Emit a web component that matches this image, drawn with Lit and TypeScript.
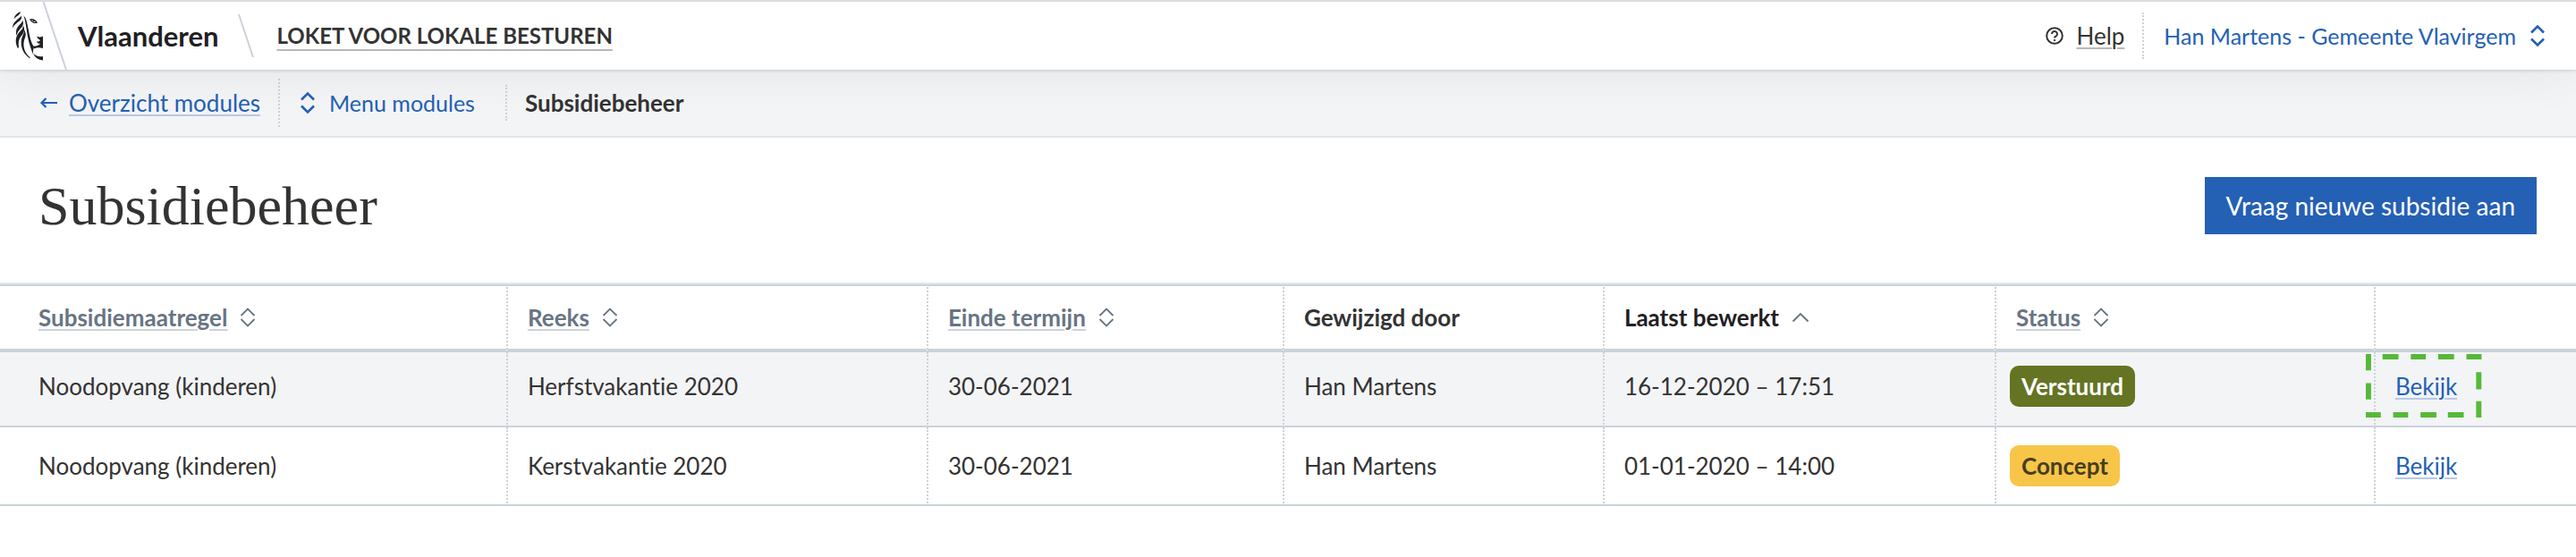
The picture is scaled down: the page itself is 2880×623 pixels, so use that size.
import { LitElement, html, css, svg } from "lit";
import { customElement, property } from "lit/decorators.js";

interface Column {
  label: string;
  sort: "none" | "both" | "asc";
}

interface Row {
  measure: string;
  series: string;
  deadline: string;
  author: string;
  edited: string;
  status: "Verstuurd" | "Concept";
  highlighted: boolean;
}

const COLUMNS: Column[] = [
  { label: "Subsidiemaatregel", sort: "both" },
  { label: "Reeks", sort: "both" },
  { label: "Einde termijn", sort: "both" },
  { label: "Gewijzigd door", sort: "none" },
  { label: "Laatst bewerkt", sort: "asc" },
  { label: "Status", sort: "both" },
];

const ROWS: Row[] = [
  {
    measure: "Noodopvang (kinderen)",
    series: "Herfstvakantie 2020",
    deadline: "30-06-2021",
    author: "Han Martens",
    edited: "16-12-2020 – 17:51",
    status: "Verstuurd",
    highlighted: true,
  },
  {
    measure: "Noodopvang (kinderen)",
    series: "Kerstvakantie 2020",
    deadline: "30-06-2021",
    author: "Han Martens",
    edited: "01-01-2020 – 14:00",
    status: "Concept",
    highlighted: false,
  },
];

const baseStyles = css`
  * {
    box-sizing: border-box;
  }
  svg {
    display: block;
    flex: none;
  }
  a {
    color: inherit;
    text-decoration: underline;
    text-decoration-thickness: 2px;
    text-underline-offset: 3px;
  }
  button {
    font: inherit;
    color: inherit;
    background: none;
    border: 0;
    padding: 0;
    cursor: pointer;
  }
`;

const selectIcon = html`<svg width="18" height="26" viewBox="0 0 18 26" fill="none" stroke="currentColor" stroke-width="2.6" aria-hidden="true">
  <path d="M2 9.5 9 2.5l7 7M2 16.5l7 7 7-7" />
</svg>`;

const sortIcon = html`<svg width="18" height="22" viewBox="0 0 18 22" fill="none" stroke="currentColor" stroke-width="1.8" aria-hidden="true">
  <path d="M1.5 9 9 1.5 16.5 9M1.5 13 9 20.5 16.5 13" />
</svg>`;

const ascIcon = html`<svg width="20" height="22" viewBox="0 0 20 22" fill="none" stroke="currentColor" stroke-width="1.8" aria-hidden="true">
  <path d="M1.5 15.5 10 7l8.500 8.500" />
</svg>`;

const lion = svg`
  <path d="M15.500 21.500C16 17.500 18.500 15 23 13C22.500 16 20.500 17 18.500 18.500Q16.500 20 15.500 21.500Z"/>
  <path d="M14 31.500C14 25.500 18 23 21.500 20Q23.500 18.500 24 17.500C25 22 21.500 23.500 18.500 26Q15 28.500 14 31.500Z"/>
  <path d="M18.500 40C16.500 31.500 21 29 24 25.500Q25 24 25 22.500C27.500 27 25 30 22 33Q19 36 18.500 40Z"/>
  <path d="M19.500 53.500C15.500 44 19 38.500 23 34.500Q26 31.500 26 28.500C28.500 33 26.500 37 24 40Q19.500 45 21 53.500Z"/>
  <path d="M33.500 65.500C24 59 21.500 48 25.500 39.500Q27.500 36 27 33.500C30 38 28.500 41 27 45C25 53 28.500 60.500 33.500 64Z"/>
  <path d="M26.500 17.500C30 21 30.500 27 32 34C33 40 34.500 47 37.500 52L38.500 50Q36.500 57 37 61C33 51 31 43 30 35C29 28 28 22 26.500 17.500Z"/>
  <path d="M33 21.500C36 20 40 21.500 42 25.500L40.500 26C37 26.500 34.500 24.500 33 21.500ZM35 22.500Q36.500 25 40 25Q38.500 22 35 22.500Z" fill-rule="evenodd"/>
  <circle cx="37.500" cy="23.500" r="1"/>
  <path d="M41 40.500Q44.500 42.500 48 40.500V54Q42.500 52.500 38 54.500L37 52Q43 51.500 45.500 48.500Q42 49.500 41 46.500Q44 47 45 45Q42 44 41 40.500Z"/>
  <path d="M37 59.500Q41 64 48 63V67.500Q40 67 37 59.500Z"/>
`;

@customElement("site-header")
class SiteHeader extends LitElement {
  static styles = [
    baseStyles,
    css`
      :host {
        display: block;
        position: relative;
        z-index: 1;
      }
      .bar {
        display: flex;
        align-items: center;
        height: 78px;
        padding-right: 34px;
        background: #fff;
        border-top: 2px solid #dcdce2;
        box-shadow: 0 1px 4px rgba(0, 0, 0, 0.16), 0 0 60px rgba(0, 0, 0, 0.07);
        color: #333332;
      }
      .brand {
        display: flex;
        align-items: center;
        gap: 11px;
        color: #1f2023;
        font-size: 31px;
        font-weight: 700;
        text-decoration: none;
      }
      .slash {
        margin: 0 25px 0 22px;
      }
      .site {
        font-size: 24px;
        font-weight: 700;
        text-decoration-color: #b8b8b8;
        text-underline-offset: 6px;
      }
      .tools {
        display: flex;
        align-items: center;
        margin-left: auto;
      }
      .help {
        display: flex;
        align-items: center;
        gap: 14px;
        padding-right: 20px;
      }
      .help a {
        text-decoration-color: #b8b8b8;
      }
      .user {
        display: flex;
        align-items: center;
        gap: 15px;
        min-height: 52px;
        padding-left: 22px;
        border-left: 2px dotted #cbd2d9;
        color: #2460b4;
        font-size: 25px;
      }
    `,
  ];

  render() {
    return html`<header class="bar">
      <a class="brand" href="#">
        <svg width="76" height="76" viewBox="0 2 76 76" aria-hidden="true">
          <g fill="#1f2023">${lion}</g>
          <path d="M48.500 2 74 78" stroke="#cbd2d9" stroke-width="2" fill="none" />
        </svg>
        <span>Vlaanderen</span>
      </a>
      <svg class="slash" width="18" height="48" viewBox="0 0 18 48" aria-hidden="true">
        <path d="M1 0 17 48" stroke="#cbd2d9" stroke-width="2" fill="none" />
      </svg>
      <a class="site" href="#">LOKET VOOR LOKALE BESTUREN</a>
      <div class="tools">
        <div class="help">
          <svg width="20" height="20" viewBox="0 0 20 20" fill="none" stroke="currentColor" stroke-width="2" aria-hidden="true">
            <circle cx="10" cy="10" r="8.800" />
            <path d="M7 8a3 3 0 1 1 4.600 2.500Q10 11.300 10 12.500" />
            <path d="M10 14v2" />
          </svg>
          <a href="#">Help</a>
        </div>
        <button class="user" type="button">Han Martens - Gemeente Vlavirgem ${selectIcon}</button>
      </div>
    </header>`;
  }
}

@customElement("module-nav")
class ModuleNav extends LitElement {
  static styles = [
    baseStyles,
    css`
      :host {
        display: block;
      }
      .nav {
        display: flex;
        align-items: center;
        height: 76px;
        padding: 0 44px;
        background: #f3f4f6;
        border-bottom: 2px solid #e4e6e9;
        color: #2460b4;
      }
      .back {
        display: flex;
        align-items: center;
        gap: 13px;
        padding-right: 20px;
      }
      .back a {
        text-decoration-color: #b4cae8;
      }
      .menu {
        display: flex;
        align-items: center;
        gap: 15px;
        min-height: 54px;
        padding: 0 34px 0 22px;
        border-left: 2px dotted #cbd2d9;
        font-size: 25px;
      }
      .current {
        display: flex;
        align-items: center;
        min-height: 40px;
        padding-left: 20px;
        border-left: 2px dotted #cbd2d9;
        color: #333332;
        font-weight: 700;
      }
    `,
  ];

  render() {
    return html`<nav class="nav" aria-label="Kruimelpad">
      <div class="back">
        <svg width="20" height="14" viewBox="0 0 20 14" fill="none" stroke="currentColor" stroke-width="2.200" aria-hidden="true">
          <path d="M20 7H2.500M7.500 2l-5 5 5 5" />
        </svg>
        <a href="#">Overzicht modules</a>
      </div>
      <button class="menu" type="button">${selectIcon} Menu modules</button>
      <span class="current" aria-current="page">Subsidiebeheer</span>
    </nav>`;
  }
}

@customElement("subsidy-table")
class SubsidyTable extends LitElement {
  @property({ attribute: false }) rows: Row[] = [];

  static styles = [
    baseStyles,
    css`
      :host {
        display: block;
      }
      .table {
        width: 100%;
        table-layout: fixed;
        border-collapse: separate;
        border-spacing: 0;
        border-top: 2px solid #e4e7ea;
        color: #333332;
      }
      .c-measure { width: 19.65%; }
      .c-series { width: 16.32%; }
      .c-deadline { width: 13.82%; }
      .c-author { width: 12.43%; }
      .c-edited { width: 15.21%; }
      .c-status { width: 14.72%; }
      .c-action { width: 7.85%; }
      th,
      td {
        padding: 0 22px;
        border-left: 2px dotted #cbd2d9;
        text-align: left;
        vertical-align: middle;
        white-space: nowrap;
      }
      th:first-child,
      td:first-child {
        padding-left: 43px;
        border-left: 0;
      }
      th {
        height: 76px;
        border-top: 2px solid #cbd2d9;
        border-bottom: 4px solid #cbd2d9;
        font-weight: 700;
      }
      td {
        height: 88px;
        border-bottom: 2px solid #cbd2d9;
      }
      .first td {
        height: 84px;
        padding-bottom: 6px;
      }
      .highlighted td {
        background: #f3f4f6;
      }
      .sort {
        display: flex;
        align-items: center;
        gap: 14px;
        color: #687483;
      }
      .sort .label {
        text-decoration: underline 2px #cbd2d9;
        text-underline-offset: 3px;
      }
      .sort.active .label {
        color: #1f2023;
        text-decoration: none;
      }
      td.status {
        padding-left: 15px;
      }
      .badge {
        display: inline-block;
        padding: 0 13px;
        border-radius: 10px;
        font-weight: 700;
        line-height: 46px;
      }
      .badge.verstuurd {
        background: #647423;
        color: #fff;
      }
      .badge.concept {
        background: #f7c548;
        color: #473d21;
      }
      .action {
        position: relative;
        color: #2460b4;
        text-decoration-color: #b4cae8;
      }
      .focus {
        position: absolute;
        inset: -20px -27px -19px -33px;
        pointer-events: none;
      }
      .focus svg {
        width: 100%;
        height: 100%;
        overflow: visible;
      }
    `,
  ];

  private header(column: Column) {
    if (column.sort === "none") return html`<th scope="col">${column.label}</th>`;
    const active = column.sort === "asc";
    return html`<th scope="col" aria-sort=${active ? "ascending" : "none"}>
      <button class="sort ${active ? "active" : ""}" type="button">
        <span class="label">${column.label}</span>${active ? ascIcon : sortIcon}
      </button>
    </th>`;
  }

  private row(row: Row, index: number) {
    return html`<tr class="${index === 0 ? "first" : ""} ${row.highlighted ? "highlighted" : ""}">
      <td>${row.measure}</td>
      <td>${row.series}</td>
      <td>${row.deadline}</td>
      <td>${row.author}</td>
      <td>${row.edited}</td>
      <td class="status"><span class="badge ${row.status.toLowerCase()}">${row.status}</span></td>
      <td>
        <a class="action" href="#">Bekijk${row.highlighted
          ? html`<span class="focus"><svg viewBox="0 0 131 70" preserveAspectRatio="none" fill="none" stroke="#55b938" aria-hidden="true">
              <path stroke-width="6" d="M19 3h18M51 3h17M82 3h18M114 3h17M0 67h17M31 67h17M62 67h18M93 67h18" />
              <path stroke-width="6" d="M3 0v18M3 32v18M3 64v6M128 0v6M128 20v19M128 52v18" />
            </svg></span>`
          : ""}</a>
      </td>
    </tr>`;
  }

  render() {
    return html`<table class="table">
      <colgroup>
        <col class="c-measure" /><col class="c-series" /><col class="c-deadline" /><col class="c-author" />
        <col class="c-edited" /><col class="c-status" /><col class="c-action" />
      </colgroup>
      <thead>
        <tr>${COLUMNS.map((c) => this.header(c))}<th scope="col" aria-label="Acties"></th></tr>
      </thead>
      <tbody>${this.rows.map((r, i) => this.row(r, i))}</tbody>
    </table>`;
  }
}

@customElement("app-root")
class AppRoot extends LitElement {
  static styles = [
    baseStyles,
    css`
      :host {
        display: block;
        min-height: 100vh;
        background: #fff;
        font-family: Lato, "Liberation Sans", sans-serif;
        font-size: 26px;
        line-height: 32px;
        font-variant-ligatures: none;
      }
      .title-bar {
        display: flex;
        align-items: center;
        justify-content: space-between;
        padding: 44px 44px 54px 43px;
      }
      .title {
        margin: 0;
        color: #333332;
        font-family: "Liberation Serif", serif;
        font-size: 62px;
        font-weight: 400;
        line-height: 64px;
      }
      .primary {
        min-height: 64px;
        padding: 0 24px;
        background: #2460b4;
        color: #fff;
        font-size: 28px;
      }
    `,
  ];

  render() {
    return html`
      <site-header></site-header>
      <module-nav></module-nav>
      <main>
        <div class="title-bar">
          <h1 class="title">Subsidiebeheer</h1>
          <button class="primary" type="button">Vraag nieuwe subsidie aan</button>
        </div>
        <subsidy-table .rows=${ROWS}></subsidy-table>
      </main>
    `;
  }
}
